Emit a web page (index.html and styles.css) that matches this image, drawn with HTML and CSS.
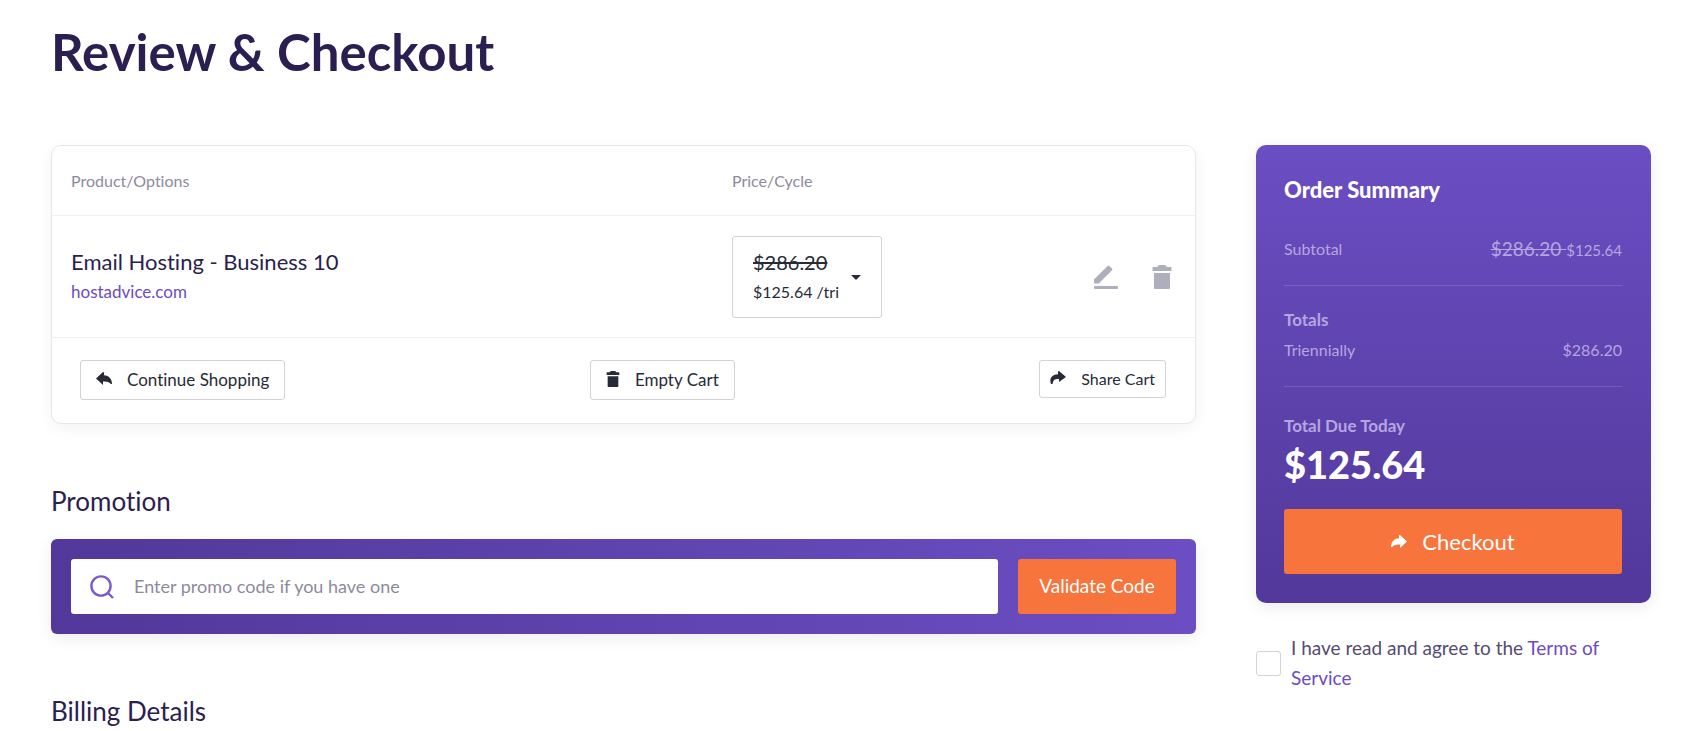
FILE: index.html
```html
<!DOCTYPE html>
<html lang="en">
<head>
  <meta charset="UTF-8">
  <meta name="viewport" content="width=device-width, initial-scale=1.0">
  <title>Review &amp; Checkout</title>
  <link rel="stylesheet" href="styles.css">
</head>
<body>
  <div class="page">
    <h1 class="page-title">Review &amp; Checkout</h1>

    <div class="checkout">
      <main class="main">
        <section class="cart">
          <table class="cart-table">
            <thead>
              <tr>
                <th class="col-product">Product/Options</th>
                <th class="col-price">Price/Cycle</th>
                <th class="col-actions"></th>
              </tr>
            </thead>
            <tbody>
              <tr>
                <td>
                  <div class="product-name">Email Hosting - Business 10</div>
                  <a class="product-domain" href="#">hostadvice.com</a>
                </td>
                <td>
                  <button class="cycle" type="button" aria-haspopup="listbox">
                    <span class="cycle-text">
                      <s class="cycle-old">$286.20</s>
                      <span class="cycle-new">$125.64 /tri</span>
                    </span>
                    <span class="caret"></span>
                  </button>
                </td>
                <td>
                  <div class="row-actions">
                    <button class="icon-button" type="button" aria-label="Edit">
                      <svg width="24" height="24" viewBox="0 0 24 24" fill="currentColor">
                        <path d="M0 14.5 L13.6 .9 Q14.5 0 15.4 .9 L18 3.5 Q18.9 4.4 18 5.3 L4.8 18.5 H1 Q0 18.5 0 17.5z"/>
                        <rect x="0" y="21" width="24" height="3" rx="1"/>
                      </svg>
                    </button>
                    <button class="icon-button" type="button" aria-label="Remove">
                      <svg width="20" height="24" viewBox="0 0 20 24" fill="currentColor">
                        <path d="M1 2 H5 Q6 0 8 0 H12 Q14 0 15 2 H18.5 Q19.5 2 19.5 3 V6 H.5 V3 Q.5 2 1 2z"/>
                        <path d="M2 8 H18 V23 Q18 24 17 24 H3 Q2 24 2 23z"/>
                      </svg>
                    </button>
                  </div>
                </td>
              </tr>
            </tbody>
          </table>

          <div class="cart-footer">
            <button class="btn-outline" type="button">
              <svg width="16" height="14" viewBox="0 0 16 14" fill="currentColor">
                <path d="M7 0 L0 6.5 L7 13 V9.5 C11 9.2 13.6 10 14.8 12 H16 C16 7 13 3.7 8 3.3 V.5 Q8 0 7 0z"/>
              </svg>
              Continue Shopping
            </button>
            <button class="btn-outline" type="button">
              <svg width="14" height="16" viewBox="0 0 20 24" fill="currentColor">
                <path d="M1 2 H5 Q6 0 8 0 H12 Q14 0 15 2 H18.5 Q19.5 2 19.5 3 V6 H.5 V3 Q.5 2 1 2z"/>
                <path d="M2 8 H18 V23 Q18 24 17 24 H3 Q2 24 2 23z"/>
              </svg>
              Empty Cart
            </button>
            <button class="btn-outline btn-share" type="button">
              <svg width="16" height="14" viewBox="0 0 16 14" fill="currentColor">
                <path d="M9 0 L16 6 L9 11 V8 C5 7.8 3 9 2.6 13 H1 C-1 8 1.5 3.6 8 3.3 V.5 Q8 0 9 0z"/>
              </svg>
              Share Cart
            </button>
          </div>
        </section>

        <h2 class="section-title">Promotion</h2>
        <form class="promo">
          <div class="promo-field">
            <svg width="24" height="24" viewBox="0 0 24 24" fill="none" stroke="currentColor" stroke-width="2.4">
              <circle cx="11" cy="11" r="9.6"/>
              <path d="M17.5 17.5 L23 23"/>
            </svg>
            <input class="promo-input" type="text" placeholder="Enter promo code if you have one" aria-label="Promo code">
          </div>
          <button class="promo-button" type="submit">Validate Code</button>
        </form>

        <h2 class="section-title">Billing Details</h2>
      </main>

      <aside class="sidebar">
        <section class="summary">
          <h2 class="summary-title">Order Summary</h2>
          <div class="summary-block">
            <div class="summary-row">
              <span>Subtotal</span>
              <span class="summary-new"><s class="summary-old">$286.20 </s>$125.64</span>
            </div>
          </div>
          <div class="summary-block">
            <div class="summary-row summary-strong">Totals</div>
            <div class="summary-row">
              <span>Triennially</span>
              <span>$286.20</span>
            </div>
          </div>
          <div class="summary-due">
            <div class="summary-row summary-strong">Total Due Today</div>
            <div class="summary-amount">$125.64</div>
          </div>
          <button class="checkout-button" type="button">
            <svg width="16" height="14" viewBox="0 0 16 14" fill="currentColor">
              <path d="M9 0 L16 6.5 L9 13 V9.5 C5 9.2 2.4 10 1.2 12 H0 C0 7 3 3.7 8 3.3 V.5 Q8 0 9 0z"/>
            </svg>
            Checkout
          </button>
        </section>

        <div class="terms">
          <input class="terms-check" type="checkbox" id="terms">
          <label for="terms">I have read and agree to the <a href="#">Terms of Service</a></label>
        </div>
      </aside>
    </div>
  </div>
</body>
</html>
```
FILE: styles.css
```css
* {
  box-sizing: border-box;
}

body {
  margin: 0;
  background: #fff;
  color: #2b1e50;
  font-family: 'Lato', 'Open Sans', sans-serif;
  font-size: 17px;
  line-height: 30px;
  font-variant-ligatures: none;
}

a {
  color: #6b4cc2;
  text-decoration: none;
}

button,
input {
  font-family: inherit;
  font-variant-ligatures: none;
}

button {
  cursor: pointer;
}

.page {
  padding: 22px 46px 0 51px;
}

.page-title {
  margin: 0 0 63px;
  font-size: 51px;
  line-height: 60px;
  font-weight: bold;
}

.checkout {
  display: grid;
  grid-template-columns: 1fr 395px;
  gap: 60px;
  align-items: start;
}

/* Cart */
.cart {
  border: 1px solid #e7e7ea;
  border-radius: 10px;
  box-shadow: 0 4px 16px rgba(0, 0, 0, 0.05);
}

.cart-table {
  width: 100%;
  table-layout: fixed;
  border-collapse: collapse;
}

.cart-table th {
  padding: 20px 19px 19px;
  font-size: 16px;
  font-weight: normal;
  text-align: left;
  color: #8e8a9d;
}

.cart-table td {
  padding: 20px 23px 19px 19px;
}

.cart-table tr {
  border-bottom: 1px solid #f1f1f3;
}

.cart-table .col-price,
.cart-table td:nth-child(2) {
  padding-left: 0;
}

.col-product {
  width: 680px;
}

.col-actions {
  width: 200px;
}

.product-name {
  font-size: 22px;
}

.product-domain {
  display: block;
}

.cycle {
  display: flex;
  align-items: center;
  gap: 12px;
  padding: 10px 20px;
  background: #fff;
  border: 1px solid #d3d3d6;
  border-radius: 3px;
  color: #272b37;
  text-align: left;
}

.cycle-text {
  display: flex;
  flex-direction: column;
  line-height: 30px;
}

.cycle-old {
  font-size: 20px;
}

.cycle-new {
  font-size: 16px;
}

.caret {
  border: 5px solid transparent;
  border-top-color: #272b37;
  border-bottom: 0;
}

.row-actions {
  display: flex;
  justify-content: flex-end;
  gap: 34px;
}

.icon-button {
  display: flex;
  padding: 0;
  background: none;
  border: 0;
  color: #adafbc;
}

.cart-footer {
  display: flex;
  justify-content: space-between;
  align-items: flex-start;
  padding: 22px 29px 23px 28px;
}

.btn-outline {
  display: flex;
  align-items: center;
  gap: 15px;
  height: 40px;
  padding: 0 15px 2px;
  background: #fff;
  border: 1px solid #d3d3d6;
  border-radius: 3px;
  color: #272b37;
  font-size: 17px;
}

.btn-share {
  height: 38px;
  padding: 0 10px 2px;
  font-size: 16px;
}

/* Promotion */
.section-title {
  margin: 59px 0 20px;
  font-size: 26px;
  line-height: 36px;
  font-weight: normal;
}

.section-title:last-child {
  margin-bottom: 0;
}

.promo {
  display: flex;
  gap: 20px;
  padding: 20px;
  background: linear-gradient(90deg, #52389a, #6b4ec3);
  border-radius: 6px;
  box-shadow: 0 4px 16px rgba(0, 0, 0, 0.08);
}

.promo-field {
  flex: 1;
  display: flex;
  align-items: center;
  gap: 20px;
  padding: 0 19px;
  background: #fff;
  border-radius: 3px;
  color: #7a5cc9;
}

.promo-input {
  flex: 1;
  height: 55px;
  padding: 0 0 2px;
  border: 0;
  outline: 0;
  background: none;
  color: #2b1e50;
  font-size: 18px;
}

.promo-input::placeholder {
  color: #8e8a9d;
}

.promo-button,
.checkout-button {
  background: #f8743d;
  border: 0;
  border-radius: 3px;
  color: #fff;
}

.promo-button {
  width: 158px;
  padding: 0 0 2px;
  font-size: 19px;
}

/* Order summary */
.summary {
  padding: 28px 29px 29px 28px;
  background: linear-gradient(#6b4ec3, #52389a);
  border-radius: 10px;
  box-shadow: 0 4px 16px rgba(0, 0, 0, 0.08);
  color: #b5a6e0;
  font-size: 16px;
}

.summary-title {
  margin: 0 0 27px;
  color: #fff;
  font-size: 22px;
  line-height: 34px;
  font-weight: 900;
}

.summary-block {
  margin-bottom: 19px;
  padding-bottom: 21px;
  border-bottom: 1px solid rgba(255, 255, 255, 0.14);
}

.summary-row {
  display: flex;
  justify-content: space-between;
  height: 30px;
}

.summary-strong {
  font-size: 17px;
  font-weight: bold;
}

.summary-new {
  font-size: 15px;
}

.summary-old {
  font-size: 19px;
}

.summary-due {
  padding-top: 5px;
}

.summary-amount {
  margin-bottom: 22px;
  color: #fff;
  font-size: 38px;
  line-height: 46px;
  font-weight: 900;
}

.checkout-button {
  display: flex;
  justify-content: center;
  align-items: center;
  gap: 15px;
  width: 100%;
  height: 65px;
  font-size: 22px;
}

.terms {
  display: flex;
  align-items: center;
  gap: 10px;
  margin-top: 30px;
  font-size: 19px;
  color: #554b73;
}

.terms-check {
  flex: none;
  appearance: none;
  width: 25px;
  height: 25px;
  margin: 0;
  background: #fff;
  border: 1px solid #d3d3d6;
  border-radius: 3px;
}

.terms-check:checked {
  background: #6b4ec3;
}
```
